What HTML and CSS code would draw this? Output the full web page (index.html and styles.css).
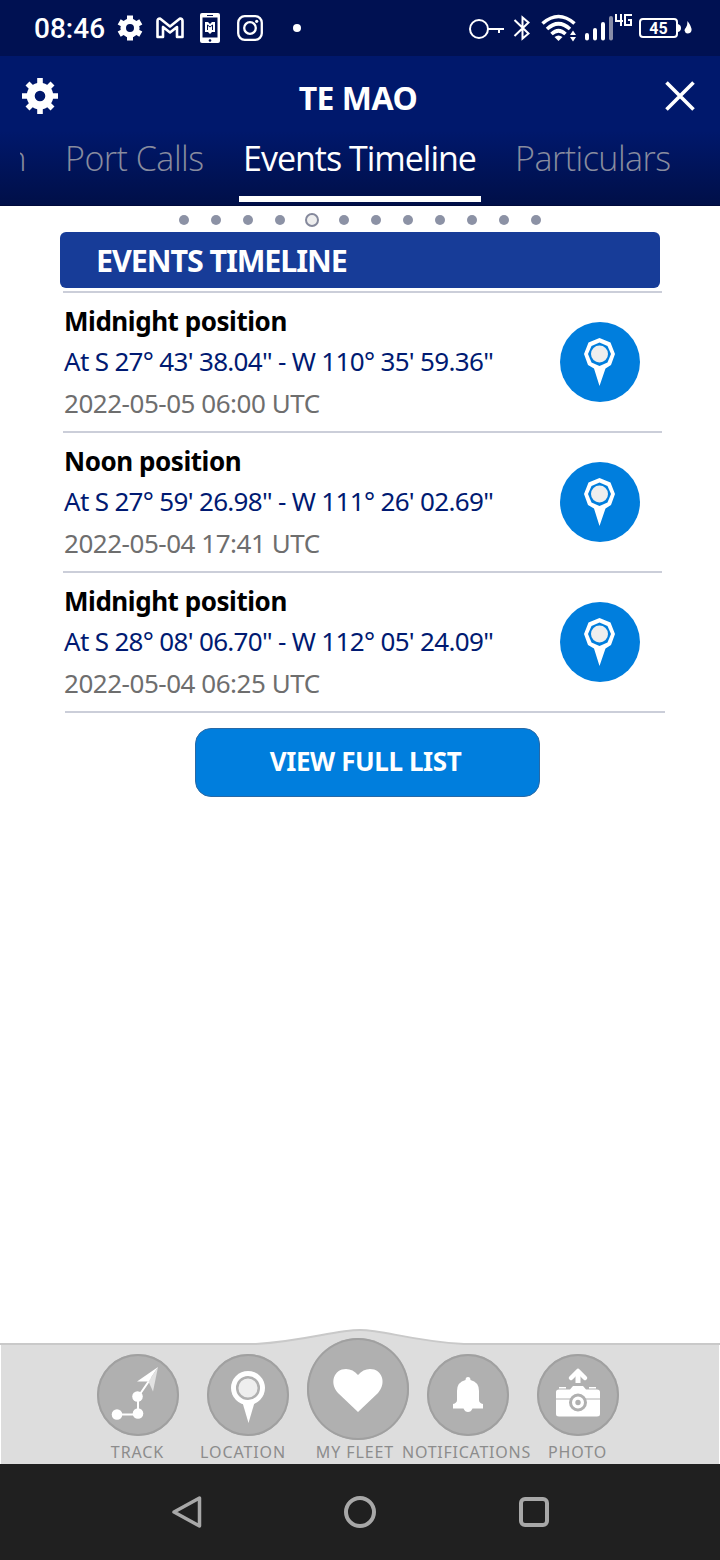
FILE: index.html
```
<!DOCTYPE html>
<html lang="en">

<head>
    <meta charset="utf-8">
    <title>Events Timeline</title>
    <link rel="stylesheet" href="styles.css">
</head>

<body>
    <svg class="defs" width="0" height="0">
        <symbol id="pin" viewBox="0 0 80 80">
            <path d="M39.500 16L50.500 20.500L55 32L51 43L45.500 46.500L39.500 64L34 46.500L28 43L24 32L28.500 20.500Z" fill="#fff" />
            <path d="M39.500 20.500L47.500 24L51 32L47.500 40.500L39.500 44L31.500 40.500L28 32L31.500 24Z" fill="#007edd" />
            <circle cx="39.500" cy="32" r="8.500" fill="#eee" />
        </symbol>
    </svg>

    <div class="status">
        <span class="time">08:46</span>
        <svg class="st-gear" width="26" height="26" viewBox="-13 -13 26 26" stroke="#fff" fill="none">
            <circle r="6.800" stroke-width="5.600" />
            <path d="M0-12.500V-8M0 12.500V8M-10.800-6.200L-7-4M10.800 6.200L7 4M10.800-6.200L7-4M-10.800 6.200L-7 4" stroke-width="6" />
        </svg>
        <svg class="st-mail" width="28" height="24" viewBox="0 0 28 24" fill="none" stroke="#fff" stroke-width="2.600" stroke-linejoin="round">
            <path d="M1.500 21V5Q1.500 2.500 4 2.500L14 10.500L24 2.500Q26.500 2.500 26.500 5V21H21V11L14 16.500L7 11V21Z" />
        </svg>
        <svg class="st-phone" width="20" height="30" viewBox="0 0 20 30">
            <rect width="20" height="30" rx="2" fill="#fff" />
            <path d="M2.500 4.500H17.500V24.500H2.500ZM7 2H13V3H7Z" fill="#001152" />
            <circle cx="10" cy="27.500" r="1.300" fill="#001152" />
            <path d="M5 9H8L10 11L12 9H15V19H12L10 21L8 19H5Z" fill="#fff" />
            <path d="M7.500 17V12L10 14L12.500 12V17" fill="none" stroke="#001152" />
        </svg>
        <svg class="st-insta" width="26" height="26" viewBox="0 0 26 26" fill="none" stroke="#fff" stroke-width="2.300">
            <rect x="1.200" y="1.200" width="23.600" height="23.600" rx="6.500" />
            <circle cx="13" cy="13" r="5.800" />
            <circle cx="19.700" cy="6.300" r="1.600" fill="#fff" stroke="none" />
        </svg>
        <i class="st-dot"></i>

        <div class="status-right">
            <svg width="36" height="22" viewBox="0 0 36 22" fill="none" stroke="#fff" stroke-width="2">
                <circle cx="10" cy="12" r="9" />
                <path d="M19 12H35M30 12V16" />
            </svg>
            <svg class="st-bt" width="18" height="26" viewBox="0 0 18 26" fill="none" stroke="#fff" stroke-width="2">
                <path d="M1.500 5L15.500 18.500L9.500 23.500V2.500L15.500 7.500L1.500 21" />
            </svg>
            <svg class="st-wifi" width="36" height="28" viewBox="0 0 36 28" fill="none" stroke="#fff" stroke-width="3.600">
                <path d="M1.500 9.500Q17.500-4.500 33.500 9.500M6 15Q17.500 4.500 29 15M10.500 20Q17.500 13.500 24.500 20" />
                <path d="M13.500 23Q17.500 20 21.500 23L17.500 27ZM29 21L32 16.500L35 21ZM29 23L32 27.500L35 23Z" fill="#fff" stroke="none" />
            </svg>
            <svg class="st-signal" width="28" height="26" viewBox="0 0 28 26" stroke="#fff" stroke-width="4" stroke-linecap="round">
                <path d="M2 20V23.500M10 15V23.500M18 9V23.500" />
                <path d="M26 3V23.500" stroke="#888da9" />
            </svg>
            <svg class="st-net" width="17" height="12" viewBox="0 0 17 12" fill="none" stroke="#fff" stroke-width="2">
                <title>4G</title>
                <path d="M1 0V7H8M6 0V12M17 1H10V11H16V6H13" />
            </svg>
            <span class="battery">45</span>
            <svg width="16" height="14" viewBox="0 0 16 14" fill="#fff">
                <path d="M0 3Q3 4 3 7Q3 10 0 11Z" />
                <path d="M9.500 0Q14 6 13.500 9.500Q13 12.500 9.500 12.500Q7 12 6.500 9.500Q6.500 8 8 6.500Q9.500 4.500 9.500 0Z" />
            </svg>
        </div>
    </div>

    <div class="header">
        <div class="titlebar">
            <svg width="36" height="36" viewBox="-18 -18 36 36" stroke="#fff" fill="none">
                <circle r="9.300" stroke-width="8" />
                <path d="M0-18V-12M0 18V12M-18 0H-12M18 0H12M-12.500-12.500L-8-8M12.500 12.500L8 8M12.500-12.500L8-8M-12.500 12.500L-8 8" stroke-width="5.600" />
            </svg>
            <h1>TE MAO</h1>
            <svg width="30" height="30" viewBox="0 0 30 30" stroke="#fff" stroke-width="3.600">
                <path d="M1.500 1.500L28.500 28.500M28.500 1.500L1.500 28.500" />
            </svg>
        </div>
        <div class="tabs">
            <span class="tab cut">n</span>
            <span class="tab calls">Port Calls</span>
            <span class="tab active">Events Timeline</span>
            <span class="tab parts">Particulars</span>
        </div>
    </div>

    <div class="dots">
        <i></i><i></i><i></i><i></i><i class="on"></i><i></i><i></i><i></i><i></i><i></i><i></i><i></i>
    </div>

    <div class="main">
        <h2>EVENTS TIMELINE</h2>
        <div class="list">
            <div class="row">
                <div>
                    <h3>Midnight position</h3>
                    <p class="pos">At S 27° 43' 38.04" - W 110° 35' 59.36"</p>
                    <p class="date">2022-05-05 06:00 UTC</p>
                </div>
                <svg class="pin"><use href="#pin" /></svg>
            </div>
            <div class="row">
                <div>
                    <h3>Noon position</h3>
                    <p class="pos">At S 27° 59' 26.98" - W 111° 26' 02.69"</p>
                    <p class="date">2022-05-04 17:41 UTC</p>
                </div>
                <svg class="pin"><use href="#pin" /></svg>
            </div>
            <div class="row last">
                <div>
                    <h3>Midnight position</h3>
                    <p class="pos">At S 28° 08' 06.70" - W 112° 05' 24.09"</p>
                    <p class="date">2022-05-04 06:25 UTC</p>
                </div>
                <svg class="pin"><use href="#pin" /></svg>
            </div>
        </div>
        <a class="btn">VIEW FULL LIST</a>
    </div>

    <div class="menu">
        <svg class="hump" width="720" height="136" viewBox="0 0 720 136">
            <path d="M1 16H256C305 13 335 2 360 2S410 13 464 16H719V136H1Z" fill="#ddd" />
            <path d="M0 16H256C305 13 335 2 360 2S410 13 464 16H720" fill="none" stroke="#c9c9c9" stroke-width="2" />
        </svg>
        <div class="item">
            <svg width="82" height="82" viewBox="0 0 82 82">
                <path d="M20 60.500H41V43L54 24" fill="none" stroke="#fff" stroke-width="2" />
                <circle cx="20" cy="60.500" r="5.300" fill="#fff" />
                <circle cx="41" cy="59.500" r="5.300" fill="#fff" />
                <circle cx="40.500" cy="42.500" r="5.300" fill="#fff" />
                <path d="M61 13L40 27.500L51.500 27.500Z" fill="#fff" />
                <path d="M61 13L51.500 27.500L56 37.500Z" fill="#e2e2e2" />
            </svg>
            <span>TRACK</span>
        </div>
        <div class="item loc">
            <svg width="82" height="82" viewBox="0 0 82 82">
                <path d="M35 47H48L41.500 69Z" fill="#fff" />
                <circle cx="41" cy="34" r="17" fill="#fff" />
                <circle cx="41" cy="34" r="10.800" fill="#eee" stroke="#b0b0b0" stroke-width="2.500" />
            </svg>
            <span>LOCATION</span>
        </div>
        <div class="item fleet">
            <svg width="102" height="102" viewBox="0 0 102 102">
                <path d="M51 74L31 55C22 45 27 31 39 31Q46 31 51 37Q56 31 63 31C75 31 80 45 71 55Z" fill="#fff" />
            </svg>
            <span>MY FLEET</span>
        </div>
        <div class="item notif">
            <svg width="82" height="82" viewBox="0 0 82 82">
                <path d="M38.500 26Q38.500 23 41 23T43.500 26Q52 28 52 37V46Q52 49 56 50V54.500H45.500Q44 58 41 58T36.500 54.500H26V50Q30 49 30 46V37Q30 28 38.500 26Z" fill="#fff" />
            </svg>
            <span>NOTIFICATIONS</span>
        </div>
        <div class="item">
            <svg width="82" height="82" viewBox="0 0 82 82">
                <path d="M41 17L34 24M41 17L48 24" stroke="#fff" stroke-width="4.500" stroke-linecap="round" />
                <path d="M41 17V29" stroke="#fff" stroke-width="5" />
                <path d="M19 38Q19 35.500 22 35.500H33L36 32H46L49 35.500H60Q63 35.500 63 38V60Q63 62.500 60 62.500H22Q19 62.500 19 60ZM22 33H29V34.500H22ZM52 33H59V34.500H52Z" fill="#fff" />
                <path d="M19 45H63" stroke="#b0b0b0" />
                <circle cx="41" cy="48.500" r="7.500" fill="#fff" stroke="#b0b0b0" stroke-width="3" />
                <circle cx="41" cy="48.500" r="2.700" fill="#b0b0b0" />
            </svg>
            <span>PHOTO</span>
        </div>
    </div>

    <div class="navbar">
        <svg width="32" height="34" viewBox="0 0 32 34" fill="none" stroke="#a8a8a8" stroke-width="3.500" stroke-linejoin="round">
            <path d="M27.500 3V31L2 17Z" />
        </svg>
        <i class="home"></i>
        <i class="recent"></i>
    </div>
</body>

</html>
```

FILE: styles.css
```
* {
    box-sizing: border-box;
}

body {
    margin: 0;
    height: 1560px;
    display: flex;
    flex-direction: column;
    background: #fff;
    font-family: "Noto Sans", "Open Sans", sans-serif;
    overflow: hidden;
}

h1,
h2,
h3,
p {
    margin: 0;
}

svg {
    display: block;
    flex: none;
}

.defs {
    position: absolute;
}

/* status bar */
.status {
    height: 56px;
    flex: none;
    display: flex;
    align-items: center;
    padding: 0 26px 0 34px;
    background: #001152;
    color: #fff;
}

.time {
    width: 70px;
    font: 500 28px/56px Roboto, sans-serif;
    padding-top: 2px;
    white-space: nowrap;
}

.st-gear {
    margin-left: 13px;
}

.st-mail {
    margin-left: 13px;
}

.st-phone {
    margin-left: 16px;
}

.st-insta {
    margin-left: 17px;
}

.st-dot {
    width: 8px;
    height: 8px;
    margin-left: 30px;
    border-radius: 50%;
    background: #fff;
}

.status-right {
    display: flex;
    align-items: center;
    margin-left: auto;
}

.st-bt {
    margin-left: 8px;
}

.st-wifi {
    margin-left: 10px;
}

.st-signal {
    margin-left: 8px;
}

.st-net {
    margin: 0 7px 16px 2px;
}

.battery {
    width: 39px;
    height: 20px;
    border: 2px solid #fff;
    border-radius: 4px;
    font: 700 16px/17px Roboto, sans-serif;
    text-align: center;
}

/* header */
.header {
    height: 150px;
    flex: none;
    background: linear-gradient(#00186c 0, #00186c 50%, #000f48 100%);
    border-bottom: 1px solid #000a3c;
    color: #fff;
}

.titlebar {
    height: 80px;
    display: flex;
    align-items: center;
    justify-content: space-between;
    padding: 0 25px 0 22px;
}

.titlebar h1 {
    font-size: 32px;
    line-height: 80px;
    padding: 3px 7px 0 0;
    letter-spacing: -0.5px;
}

.tabs {
    display: flex;
    height: 66px;
    padding-left: 20px;
}

.tab {
    flex: none;
    font-family: "Open Sans", "Noto Sans", sans-serif;
    font-size: 34px;
    font-weight: 300;
    line-height: 44px;
    color: #888c9f;
    white-space: nowrap;
    letter-spacing: -0.5px;
}

.cut {
    display: flex;
    justify-content: flex-end;
    width: 6px;
    overflow: hidden;
}

.calls {
    width: 174px;
    margin-left: 39px;
}

.active {
    width: 242px;
    padding-left: 4px;
    border-bottom: 6px solid #fff;
    color: #fff;
    font-weight: 400;
    letter-spacing: -1px;
}

.parts {
    margin-left: 34px;
}

.dots {
    height: 26px;
    display: flex;
    flex: none;
    align-items: center;
    justify-content: center;
    gap: 22px;
    padding-top: 2px;
}

.dots i {
    width: 10px;
    height: 10px;
    border-radius: 50%;
    background: #8c92a5;
}

.dots .on {
    width: 14px;
    height: 14px;
    margin: 0 -2px;
    background: #eee;
    border: 2px solid #85899c;
}

/* content */
.main {
    flex: 1;
    padding: 0 55px 0 60px;
}

.main h2 {
    width: 600px;
    height: 56px;
    padding-left: 36px;
    border-radius: 6px;
    background: #173c98;
    color: #fff;
    font-size: 30.500px;
    line-height: 57px;
    letter-spacing: -1.1px;
}

.list {
    width: 599px;
    margin: 3px 0 0 3px;
    border-top: 2px solid #cbced9;
}

.row {
    display: flex;
    justify-content: space-between;
    height: 140px;
    padding: 8px 22px 0 1px;
    border-bottom: 2px solid #cbced9;
    white-space: nowrap;
}

.last {
    width: 600px;
    margin-left: 2px;
    padding: 8px 25px 0 0;
}

.last > div {
    margin-left: -1px;
}

.row h3 {
    font-size: 26px;
    line-height: 41px;
    height: 40px;
    letter-spacing: -0.45px;
}

.row p {
    font-size: 26px;
    line-height: 40px;
    letter-spacing: -0.68px;
}

.pos {
    color: #001a72;
}

.row .date {
    margin-top: 2px;
    color: #6e6e6e;
    letter-spacing: -0.47px;
}

.pin {
    width: 80px;
    height: 80px;
    margin-top: 21px;
    border-radius: 50%;
    background: #007edd;
}

.btn {
    display: block;
    width: 345px;
    height: 69px;
    margin: 15px 0 0 134.500px;
    border: 1px solid #2869a6;
    border-radius: 16px;
    background: #007edd;
    color: #fff;
    font-size: 26px;
    font-weight: 700;
    line-height: 64px;
    text-align: center;
    letter-spacing: -0.4px;
    padding-right: 3px;
}

/* bottom menu */
.menu {
    position: relative;
    display: flex;
    flex: none;
    height: 136px;
    padding-left: 83px;
}

.hump {
    position: absolute;
    top: 0;
    left: 0;
}

.item {
    position: relative;
    display: flex;
    flex-direction: column;
    align-items: center;
    width: 110px;
    padding-top: 26px;
}

.item svg {
    border-radius: 50%;
    background: #b0b0b0;
    box-shadow: inset 0 0 0 2px #a0a0a0;
}

.item span {
    color: #8c8c8c;
    font-size: 16px;
    line-height: 24px;
    letter-spacing: 0.9px;
    padding: 4px 1px 0 0;
}

.loc span {
    padding-right: 10px;
}

.fleet {
    padding-top: 10px;
}

.fleet span {
    padding: 0 6px 0 0;
}

.notif span {
    padding-right: 3px;
    letter-spacing: 0.75px;
}

/* android buttons */
.navbar {
    display: flex;
    flex: none;
    align-items: center;
    height: 96px;
    padding-left: 172px;
    background: #202020;
}

.home {
    width: 32px;
    height: 32px;
    margin-left: 140px;
    border: 4px solid #a8a8a8;
    border-radius: 50%;
}

.recent {
    width: 30px;
    height: 30px;
    margin-left: 143px;
    border: 4px solid #a8a8a8;
    border-radius: 6px;
}
```
